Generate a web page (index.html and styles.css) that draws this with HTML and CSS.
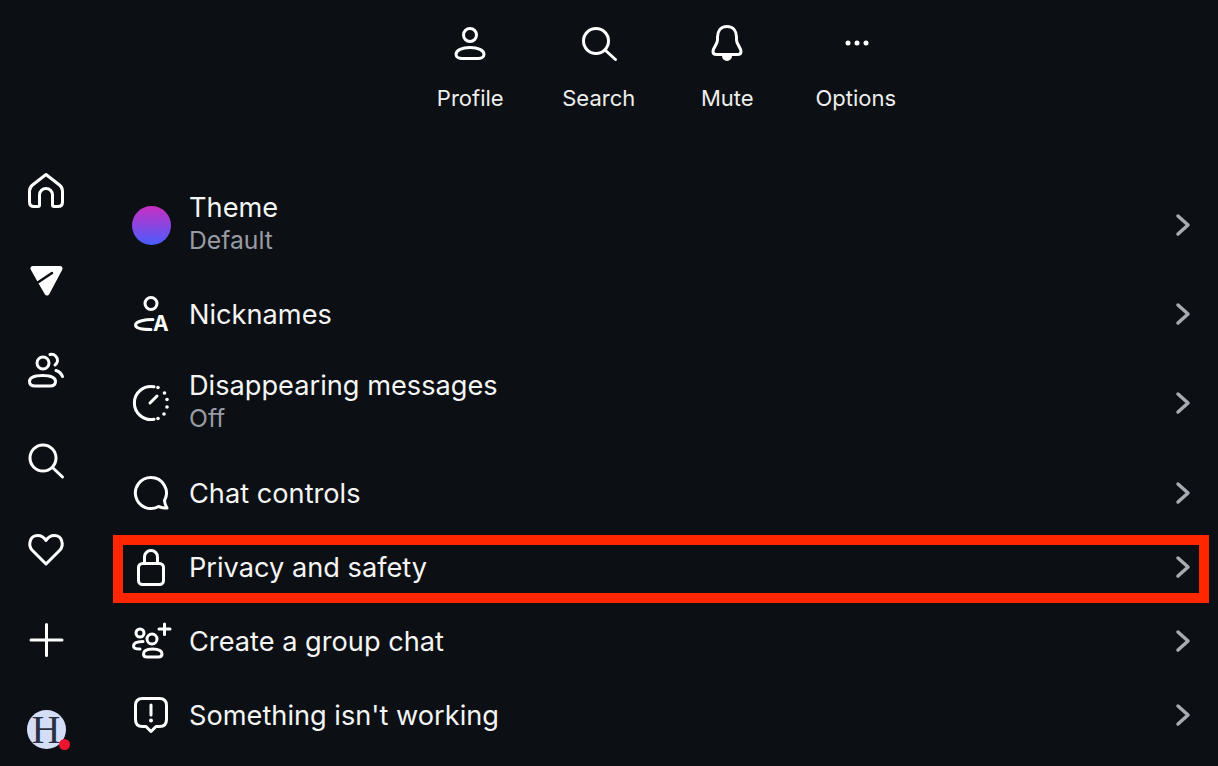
FILE: index.html
```html
<!DOCTYPE html>
<html lang="en">
<head>
    <meta charset="UTF-8">
    <title>Chat details</title>
    <link rel="stylesheet" href="styles.css">
</head>
<body>
    <div class="app">
        <!-- left rail -->
        <nav class="rail">
            <svg class="icon" viewBox="0 0 40 40"><path d="M20 4.5 L33.5 15 Q36.5 17.5 36.5 21 V32 Q36.5 36.5 32 36.5 H28 Q26.5 36.5 26.5 35 V25 A6.5 6.5 0 0 0 13.5 25 V35 Q13.5 36.5 12 36.5 H8 Q3.5 36.5 3.5 32 V21 Q3.5 17.5 6.5 15 Z"/></svg>
            <svg class="icon" viewBox="0 0 40 40"><path class="solid blob" d="M7 8.5 H34 L21 33 L14 21 Z"/><path class="cut" d="M11 23 L26 13"/></svg>
            <svg class="icon" viewBox="0 0 40 40"><circle cx="17" cy="13" r="6"/><path d="M3.5 31.5 C3.5 27.5 9 25.5 16.5 25.5 C24 25.5 29.5 27.5 29.5 31.5 C29.5 35 27 36 24 36 H9 C6 36 3.5 35 3.5 31.5 Z"/><path d="M24 4.5 C29 3.5 32 8 31.5 11 C31.2 13 30 14 29 15"/><path d="M30 20.5 C33 21.5 35.5 24 36.5 26.5"/></svg>
            <svg class="icon" viewBox="0 0 40 40"><circle cx="17" cy="18" r="13"/><path d="M27 28 L36.5 37"/></svg>
            <svg class="icon" viewBox="0 0 40 40"><path d="M20 34 L6 20 C2 15.5 3.5 5.5 11.5 5.5 C15.5 5.5 18.5 8 20 10.5 C21.5 8 24.5 5.5 28.5 5.5 C36.5 5.5 38 15.5 34 20 Z"/></svg>
            <svg class="icon" viewBox="0 0 40 40"><path d="M20.5 4.5 V35.5 M5 20 H36"/></svg>
            <div class="avatar">H<span class="dot"></span></div>
        </nav>

        <main class="main">
            <!-- top actions -->
            <div class="actions">
                <div class="action">
                    <svg class="icon" viewBox="0 0 40 40"><circle cx="20" cy="12" r="6.5"/><path d="M6 31.5 C6 27 12 24.5 20 24.5 C28 24.5 34 27 34 31.5 C34 34 31 35.5 28 35.5 H12 C9 35.5 6 34 6 31.5 Z"/></svg>
                    <span>Profile</span>
                </div>
                <div class="action">
                    <svg class="icon" viewBox="0 0 40 40"><circle cx="17" cy="18" r="12.5"/><path d="M26 27 L36.5 36.5"/></svg>
                    <span>Search</span>
                </div>
                <div class="action">
                    <svg class="icon" viewBox="0 0 40 40"><path d="M20 3.5 C13.5 3.5 10.5 8.5 10.5 14 V17 C10.5 21.5 6 24.5 6 28.5 C6 30.5 7.5 31.5 9.5 31.5 H30.5 C32.5 31.5 34 30.5 34 28.5 C34 24.5 29.5 21.5 29.5 17 V14 C29.5 8.5 26.5 3.5 20 3.5 Z"/><path class="solid" d="M16.5 33 a3.5 3.5 0 0 0 7 0 Z"/></svg>
                    <span>Mute</span>
                </div>
                <div class="action">
                    <svg class="icon" viewBox="0 0 40 40"><circle class="fill" cx="12" cy="20" r="2.5"/><circle class="fill" cx="21" cy="20" r="2.5"/><circle class="fill" cx="30" cy="20" r="2.5"/></svg>
                    <span>Options</span>
                </div>
            </div>

            <!-- settings list -->
            <div class="list">
                <div class="row tall">
                    <span class="swatch-wrap"><span class="swatch"></span></span>
                    <div class="text"><div class="title">Theme</div><div class="sub">Default</div></div>
                    <svg class="chevron" viewBox="0 0 16 24"><path d="M3 3 L13 12 L3 21"/></svg>
                </div>
                <div class="row">
                    <svg class="icon" viewBox="0 0 40 40"><circle cx="20" cy="9.5" r="6"/><path d="M22 25.5 C13 25.5 4.5 27.5 4.5 31 C4.5 34 9 35.5 20 35.5"/><text class="letter" x="22" y="37">A</text></svg>
                    <div class="text"><div class="title">Nicknames</div></div>
                    <svg class="chevron" viewBox="0 0 16 24"><path d="M3 3 L13 12 L3 21"/></svg>
                </div>
                <div class="row tall">
                    <svg class="icon" viewBox="0 0 40 40"><path d="M23 3.8 A16.5 16.5 0 1 0 23 36.2"/><path d="M19 20 L26 13"/><g class="ticks"><circle cx="27" cy="4.5" r="1.8"/><circle cx="33.5" cy="10" r="1.8"/><circle cx="36" cy="16.5" r="1.8"/><circle cx="36" cy="24" r="1.8"/><circle cx="33" cy="31" r="1.8"/><circle cx="27" cy="35.5" r="1.8"/></g></svg>
                    <div class="text"><div class="title">Disappearing messages</div><div class="sub">Off</div></div>
                    <svg class="chevron" viewBox="0 0 16 24"><path d="M3 3 L13 12 L3 21"/></svg>
                </div>
                <div class="row chat">
                    <svg class="icon" viewBox="0 0 40 40"><path d="M20 4.5 A15.5 15.5 0 1 0 27.5 33.5 C30 34.5 33 35.5 36 35 C34.5 32.5 33.5 30 33.5 27.5 A15.5 15.5 0 0 0 20 4.5 Z"/></svg>
                    <div class="text"><div class="title">Chat controls</div></div>
                    <svg class="chevron" viewBox="0 0 16 24"><path d="M3 3 L13 12 L3 21"/></svg>
                </div>
                <div class="row marked">
                    <svg class="icon" viewBox="0 0 40 40"><rect x="7.5" y="16.5" width="25" height="21" rx="4"/><path d="M13.5 16 V10 A6.5 6.5 0 0 1 26.5 10 V16"/></svg>
                    <div class="text"><div class="title">Privacy and safety</div></div>
                    <svg class="chevron" viewBox="0 0 16 24"><path d="M3 3 L13 12 L3 21"/></svg>
                </div>
                <div class="row">
                    <svg class="icon" viewBox="0 0 40 40"><circle cx="21" cy="18" r="5"/><path d="M12.5 33 C12.5 29.5 16 28 21.5 28 C27 28 31 29.5 31 33 C31 35 29 36 27 36 H16 C14 36 12.5 35 12.5 33 Z"/><circle cx="9" cy="12" r="4"/><path d="M12 20.5 C7 20.5 2.5 22 2.5 25 C2.5 27 5 28 9 28"/><path d="M33.5 3 V13.5 M28 8 H39"/></svg>
                    <div class="text"><div class="title">Create a group chat</div></div>
                    <svg class="chevron" viewBox="0 0 16 24"><path d="M3 3 L13 12 L3 21"/></svg>
                </div>
                <div class="row">
                    <svg class="icon" viewBox="0 0 40 40"><path d="M11.5 3.5 H28.5 Q35.5 3.5 35.5 10.5 V24.5 Q35.5 31.5 28.5 31.5 H25 L20 36.5 L15 31.5 H11.5 Q4.5 31.5 4.5 24.5 V10.5 Q4.5 3.5 11.5 3.5 Z"/><path d="M20 10 V20"/><circle class="fill" cx="20" cy="25.5" r="2"/></svg>
                    <div class="text"><div class="title">Something isn't working</div></div>
                    <svg class="chevron" viewBox="0 0 16 24"><path d="M3 3 L13 12 L3 21"/></svg>
                </div>
            </div>
        </main>
    </div>
</body>
</html>
```
FILE: styles.css
```css
:root {
    --bg: #0c1014;
    --text: #f5f5f5;
    --muted: #989ba3;
    --chevron: #a8abb3;
    --mark: #ff2600;
}

* {
    margin: 0;
    padding: 0;
    box-sizing: border-box;
}

html, body {
    height: 100%;
}

body {
    background: var(--bg);
    color: var(--text);
    font-family: Inter, "Liberation Sans", sans-serif;
    overflow: hidden;
}

.app {
    display: flex;
    height: 766px;
}

/* icons */
.icon {
    width: 40px;
    height: 40px;
    flex-shrink: 0;
    overflow: visible;
    fill: none;
    stroke: #fff;
    stroke-width: 3;
    stroke-linecap: round;
    stroke-linejoin: round;
}

.icon .solid {
    fill: #fff;
}

.icon .blob {
    stroke-width: 5;
}

.icon .fill,
.icon .ticks circle {
    fill: #fff;
    stroke: none;
}

.icon .cut {
    stroke: var(--bg);
    stroke-width: 2.6;
}

.icon .letter {
    fill: #fff;
    stroke: none;
    font-size: 21px;
    font-weight: 700;
    font-family: Inter, sans-serif;
}

/* left rail */
.rail {
    width: 108px;
    flex-shrink: 0;
    padding: 170px 16px 0 0;
    display: flex;
    flex-direction: column;
    align-items: center;
    gap: 50px;
}

.avatar {
    position: relative;
    width: 39px;
    height: 39px;
    border-radius: 50%;
    background: #d3ddf6;
    color: #2a3040;
    font-family: "Liberation Serif", serif;
    font-size: 40px;
    line-height: 39px;
    text-align: center;
}

.dot {
    position: absolute;
    right: -4px;
    bottom: -1px;
    width: 11px;
    height: 11px;
    border-radius: 50%;
    background: #f0132f;
}

/* top actions */
.main {
    flex: 1;
    min-width: 0;
}

.actions {
    height: 173px;
    padding-top: 23px;
    display: flex;
    justify-content: center;
}

.action {
    width: 128.5px;
    display: flex;
    flex-direction: column;
    align-items: center;
    gap: 20px;
    font-size: 22px;
    line-height: 30px;
    color: #eeeeee;
}

/* settings list */
.list {
    margin: 0 9px 0 5px;
}

.row {
    position: relative;
    height: 74px;
    padding: 0 18px;
    display: flex;
    align-items: center;
    gap: 18px;
}

.row.tall {
    height: 104px;
}

.row.chat {
    margin-top: 1px;
}

.row.marked::after {
    content: "";
    position: absolute;
    top: 5px;
    left: 0;
    right: 0;
    bottom: 1px;
    border: 10px solid var(--mark);
}

.text {
    flex: 1;
    padding-top: 2px;
}

.row.tall .text {
    padding-top: 0;
    padding-bottom: 3px;
}

.title {
    font-size: 27.2px;
    line-height: 32px;
}

.sub {
    font-size: 24.7px;
    line-height: 32px;
    color: var(--muted);
}

.swatch-wrap {
    width: 40px;
    height: 40px;
    flex-shrink: 0;
    display: flex;
    align-items: center;
    justify-content: center;
}

.swatch {
    width: 39px;
    height: 39px;
    border-radius: 50%;
    background: linear-gradient(180deg, #c92fc0, #4a5cff);
}

.chevron {
    width: 16px;
    height: 24px;
    flex-shrink: 0;
    fill: none;
    stroke: var(--chevron);
    stroke-width: 3.5;
    stroke-linecap: round;
    stroke-linejoin: round;
}
```
